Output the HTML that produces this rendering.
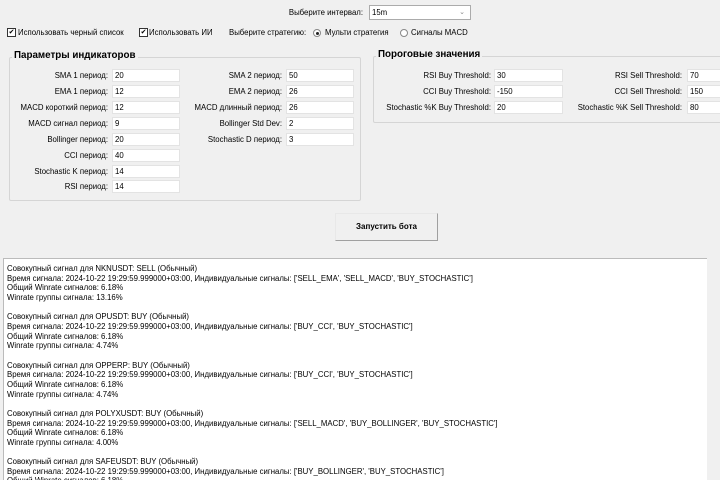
<!DOCTYPE html>
<html><head><meta charset="utf-8"><style>
html,body{margin:0;width:720px;height:480px;overflow:hidden}
body{background:#f0f0f0;font-family:"Liberation Sans",sans-serif;font-size:7.8px;color:#000;position:relative}
.a{position:absolute;white-space:nowrap}
.l{position:absolute;text-align:right;white-space:nowrap;line-height:13px}
.i{position:absolute;background:#fff;border:1px solid #e3e3e3;height:11px;line-height:11px;padding-left:2px;box-sizing:content-box}
.g{position:absolute;border:1px solid #d5d5d5;border-radius:2px}
.t{position:absolute;background:#f0f0f0;font-weight:bold;font-size:9.8px;padding:0 2px}
.cb{position:absolute;width:7px;height:7px;border:1px solid #333;font-size:7px;line-height:7px;text-align:center;background:#fff}
.rb{position:absolute;width:6px;height:6px;border:1px solid #888;border-radius:50%;background:#fff}
.rb.on::after{content:"";position:absolute;left:1.5px;top:1.5px;width:3px;height:3px;border-radius:50%;background:#222}
#log{position:absolute;left:3px;top:258px;width:704px;height:222px;overflow:hidden;background:#fff;border-top:1px solid #bbb;border-left:1px solid #bbb;padding:5px 0 0 3px;box-sizing:border-box;line-height:9.66px;font-size:7.8px;white-space:pre}
</style></head><body>
<div class="l" style="right:357px;top:6px">Выберите интервал:</div>
<div class="i" style="left:369px;top:5px;width:98px;height:13px;border-color:#ababab;line-height:13px">15m<span style="position:absolute;right:5px;top:0;color:#888;font-size:7px">⌄</span></div>

<span class="cb" style="left:7px;top:28px">✔</span><div class="a" style="left:18px;top:27px;line-height:11px">Использовать черный список</div>
<span class="cb" style="left:139px;top:28px">✔</span><div class="a" style="left:149px;top:27px;line-height:11px">Использовать ИИ</div>
<div class="a" style="left:229px;top:27px;line-height:11px">Выберите стратегию:</div>
<span class="rb on" style="left:313px;top:29px"></span><div class="a" style="left:325px;top:27px;line-height:11px">Мульти стратегия</div>
<span class="rb" style="left:400px;top:29px"></span><div class="a" style="left:411px;top:27px;line-height:11px">Сигналы MACD</div>

<div class="g" style="left:9px;top:57px;width:350px;height:142px"></div>
<div class="t" style="left:12px;top:50px">Параметры индикаторов</div>
<div class="g" style="left:373px;top:56px;width:350px;height:65px"></div>
<div class="t" style="left:376px;top:49px">Пороговые значения</div>

<div class="l" style="right:612px;top:69px">SMA 1 период:</div><div class="i" style="left:112px;top:69px;width:64px">20</div>
<div class="l" style="right:612px;top:85px">EMA 1 период:</div><div class="i" style="left:112px;top:85px;width:64px">12</div>
<div class="l" style="right:612px;top:101px">MACD короткий период:</div><div class="i" style="left:112px;top:101px;width:64px">12</div>
<div class="l" style="right:612px;top:117px">MACD сигнал период:</div><div class="i" style="left:112px;top:117px;width:64px">9</div>
<div class="l" style="right:612px;top:133px">Bollinger период:</div><div class="i" style="left:112px;top:133px;width:64px">20</div>
<div class="l" style="right:612px;top:149px">CCI период:</div><div class="i" style="left:112px;top:149px;width:64px">40</div>
<div class="l" style="right:612px;top:165px">Stochastic K период:</div><div class="i" style="left:112px;top:165px;width:64px">14</div>
<div class="l" style="right:612px;top:180px">RSI период:</div><div class="i" style="left:112px;top:180px;width:64px">14</div>

<div class="l" style="right:438px;top:69px">SMA 2 период:</div><div class="i" style="left:286px;top:69px;width:64px">50</div>
<div class="l" style="right:438px;top:85px">EMA 2 период:</div><div class="i" style="left:286px;top:85px;width:64px">26</div>
<div class="l" style="right:438px;top:101px">MACD длинный период:</div><div class="i" style="left:286px;top:101px;width:64px">26</div>
<div class="l" style="right:438px;top:117px">Bollinger Std Dev:</div><div class="i" style="left:286px;top:117px;width:64px">2</div>
<div class="l" style="right:438px;top:133px">Stochastic D период:</div><div class="i" style="left:286px;top:133px;width:64px">3</div>

<div class="l" style="right:229px;top:69px">RSI Buy Threshold:</div><div class="i" style="left:494px;top:69px;width:65px">30</div>
<div class="l" style="right:229px;top:85px">CCI Buy Threshold:</div><div class="i" style="left:494px;top:85px;width:65px">-150</div>
<div class="l" style="right:229px;top:101px">Stochastic %K Buy Threshold:</div><div class="i" style="left:494px;top:101px;width:65px">20</div>
<div class="l" style="right:38px;top:69px">RSI Sell Threshold:</div><div class="i" style="left:687px;top:69px;width:40px">70</div>
<div class="l" style="right:38px;top:85px">CCI Sell Threshold:</div><div class="i" style="left:687px;top:85px;width:40px">150</div>
<div class="l" style="right:38px;top:101px">Stochastic %K Sell Threshold:</div><div class="i" style="left:687px;top:101px;width:40px">80</div>

<div class="a" style="left:335px;top:213px;width:101px;height:26px;background:#f0f0f0;border:1px solid #e8e8e8;border-right-color:#a0a0a0;border-bottom-color:#a0a0a0;text-align:center;line-height:26px;font-weight:bold;font-size:8px">Запустить бота</div>

<div id="log">Совокупный сигнал для NKNUSDT: SELL (Обычный)
Время сигнала: 2024-10-22 19:29:59.999000+03:00, Индивидуальные сигналы: ['SELL_EMA', 'SELL_MACD', 'BUY_STOCHASTIC']
Общий Winrate сигналов: 6.18%
Winrate группы сигнала: 13.16%

Совокупный сигнал для OPUSDT: BUY (Обычный)
Время сигнала: 2024-10-22 19:29:59.999000+03:00, Индивидуальные сигналы: ['BUY_CCI', 'BUY_STOCHASTIC']
Общий Winrate сигналов: 6.18%
Winrate группы сигнала: 4.74%

Совокупный сигнал для OPPERP: BUY (Обычный)
Время сигнала: 2024-10-22 19:29:59.999000+03:00, Индивидуальные сигналы: ['BUY_CCI', 'BUY_STOCHASTIC']
Общий Winrate сигналов: 6.18%
Winrate группы сигнала: 4.74%

Совокупный сигнал для POLYXUSDT: BUY (Обычный)
Время сигнала: 2024-10-22 19:29:59.999000+03:00, Индивидуальные сигналы: ['SELL_MACD', 'BUY_BOLLINGER', 'BUY_STOCHASTIC']
Общий Winrate сигналов: 6.18%
Winrate группы сигнала: 4.00%

Совокупный сигнал для SAFEUSDT: BUY (Обычный)
Время сигнала: 2024-10-22 19:29:59.999000+03:00, Индивидуальные сигналы: ['BUY_BOLLINGER', 'BUY_STOCHASTIC']
Общий Winrate сигналов: 6.18%</div>
</body></html>
